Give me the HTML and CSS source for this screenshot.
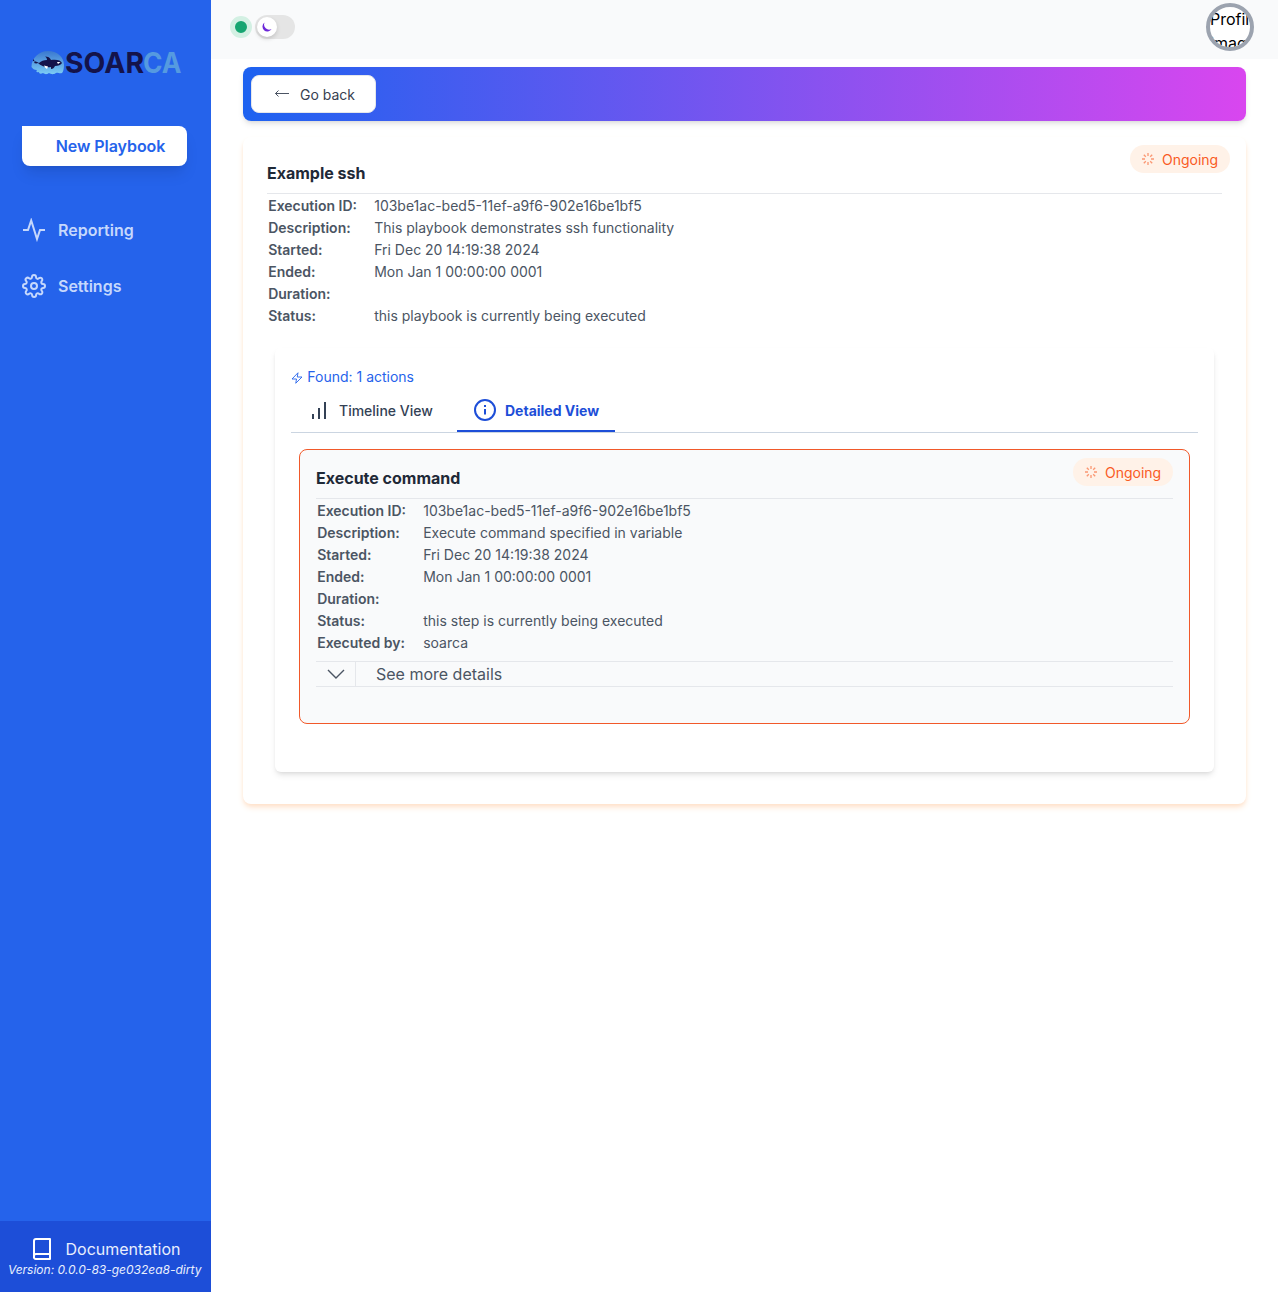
FILE: index.html
```html
<!DOCTYPE html>
<html lang="en">
<head>
<meta charset="utf-8">
<title>SOARCA</title>
<link rel="stylesheet" href="styles.css">
</head>
<body>
<div class="app">
  <aside class="sidebar">
    <svg class="logo" width="154" height="26" viewBox="0 0 154 26">
      <defs>
        <linearGradient id="sea" x1="0" y1="0" x2="0" y2="1"><stop offset="0" stop-color="#3a78d0"/><stop offset="1" stop-color="#7cccf5"/></linearGradient>
      </defs>
      <path fill="url(#sea)" d="M1.500 17C1.500 8 9 1 18 1s16 6 16 14c0 4-1 7-2 8-3 1-4-1-6 0-3 2-5 1-7 0-3 2-4 1-6 0-2 1-4 1-4-1-3 1-3-1-2-2-3 0-4-1-5.500-3z"/>
      <path fill="#14134a" d="M3 11c3 0 4 1 6 2 2-2 5-3 8-3 0-2-1-3-2-3.500 3 0 5 1 6 3.500 5-1 10 0 11 3-1 2-4 3-7 3-1 2-2 3-4 3v-2c-5 1-10-1-13-4-2 1-3 0-4 0 1-1 1-2-1-4z"/>
      <path fill="#fff" d="M14 15.500l4 1-1 2.500-2-1.500zM27 12h3.500l-2.500 2z"/>
      <text class="logo-dark" x="35" y="22.500" textLength="79" lengthAdjust="spacingAndGlyphs">SOAR</text>
      <text class="logo-light" x="113" y="22.500" textLength="38.500" lengthAdjust="spacingAndGlyphs">CA</text>
    </svg>
    <button class="new-playbook">New Playbook</button>
    <nav class="nav">
      <a class="nav-item"><svg width="24" height="24" viewBox="0 0 24 24" fill="none" stroke="currentColor" stroke-width="2"><path d="M1 12h5L9.200 2.500 15 21l3-9h5"/></svg>Reporting</a>
      <a class="nav-item"><svg width="24" height="24" viewBox="0 0 24 24" fill="none" stroke="currentColor" stroke-width="2" stroke-linejoin="round"><circle cx="12" cy="12" r="3"/><path d="M19.400 15a1.650 1.650 0 0 0 .33 1.820l.06.06a2 2 0 1 1-2.830 2.830l-.06-.06a1.650 1.650 0 0 0-2.800 1.170V21a2 2 0 0 1-4 0v-.09A1.650 1.650 0 0 0 9 19.400a1.650 1.650 0 0 0-1.820.33l-.06.06a2 2 0 1 1-2.830-2.830l.06-.06a1.650 1.650 0 0 0-1.170-2.800H3a2 2 0 0 1 0-4h.09A1.650 1.650 0 0 0 4.600 9a1.650 1.650 0 0 0-.33-1.820l-.06-.06a2 2 0 1 1 2.830-2.830l.06.06A1.650 1.650 0 0 0 9 4.600a1.650 1.650 0 0 0 1-1.510V3a2 2 0 0 1 4 0v.09a1.650 1.650 0 0 0 2.820 1.260l.06-.06a2 2 0 1 1 2.830 2.830l-.06.06A1.650 1.650 0 0 0 19.400 9a1.650 1.650 0 0 0 1.510 1H21a2 2 0 0 1 0 4h-.09A1.650 1.650 0 0 0 19.400 15z"/></svg>Settings</a>
    </nav>
    <footer class="side-footer">
      <a class="docs"><svg width="24" height="24" viewBox="0 0 24 24" fill="none" stroke="currentColor" stroke-width="2" stroke-linejoin="round"><path d="M4 19.500V4a2 2 0 0 1 2-2h14v20H6a2 2 0 0 1-2-2.500zM4 19a2 2 0 0 1 2-2h14"/></svg>Documentation</a>
      <em class="version">Version: 0.0.0-83-ge032ea8-dirty</em>
    </footer>
  </aside>
  <div class="content">
    <header class="topbar">
      <span class="online"></span>
      <span class="toggle"><span class="knob"><svg width="12" height="12" viewBox="0 0 12 12"><path fill="#6d28d9" d="M3.600 1.500A4.900 4.900 0 1 0 10.600 8 5 5 0 0 1 3.600 1.500z"/></svg></span></span>
      <span class="avatar">Profile image</span>
    </header>
    <main class="main">
      <div class="banner">
        <button class="back"><svg width="16" height="16" viewBox="0 0 16 16" fill="none" stroke="currentColor" stroke-width=".9"><path d="M15 7.500H1.500M4.500 4.500l-3 3 3 3"/></svg>Go back</button>
      </div>
      <section class="card">
        <span class="badge"><svg width="12" height="12" viewBox="0 0 12 12" stroke="currentColor" stroke-width="1.300"><path d="M6 0v3M6 9v3M0 6h3M9 6h3M1.800 1.800l2 2M8.200 8.200l2 2M1.800 10.200l2-2M8.200 3.800l2-2"/></svg>Ongoing</span>
        <h2 class="title">Example ssh</h2>
        <dl class="facts">
          <dt>Execution ID:</dt><dd>103be1ac-bed5-11ef-a9f6-902e16be1bf5</dd>
          <dt>Description:</dt><dd>This playbook demonstrates ssh functionality</dd>
          <dt>Started:</dt><dd>Fri Dec 20 14:19:38 2024</dd>
          <dt>Ended:</dt><dd>Mon Jan 1 00:00:00 0001</dd>
          <dt>Duration:</dt><dd></dd>
          <dt>Status:</dt><dd>this playbook is currently being executed</dd>
        </dl>
        <div class="panel">
          <p class="found"><svg width="12" height="12" viewBox="0 0 24 24" fill="none" stroke="currentColor" stroke-width="1.800" stroke-linejoin="round"><path d="M14 1.500 2 14h9l-1.500 8.500L22 10h-9.500z"/></svg>Found: 1 actions</p>
          <div class="tabs">
            <a class="tab"><svg width="24" height="24" viewBox="0 0 24 24" fill="none" stroke="currentColor" stroke-width="2"><path d="M6 21v-5M12 21V10M18 21V4"/></svg>Timeline View</a>
            <a class="tab active"><svg width="24" height="24" viewBox="0 0 24 24" fill="none" stroke="currentColor" stroke-width="2"><circle cx="12" cy="12" r="10"/><path d="M12 16.500v-5.500M12 9V7"/></svg>Detailed View</a>
          </div>
          <article class="step">
            <span class="badge"><svg width="12" height="12" viewBox="0 0 12 12" stroke="currentColor" stroke-width="1.300"><path d="M6 0v3M6 9v3M0 6h3M9 6h3M1.800 1.800l2 2M8.200 8.200l2 2M1.800 10.200l2-2M8.200 3.800l2-2"/></svg>Ongoing</span>
            <h2 class="title">Execute command</h2>
            <dl class="facts">
              <dt>Execution ID:</dt><dd>103be1ac-bed5-11ef-a9f6-902e16be1bf5</dd>
              <dt>Description:</dt><dd>Execute command specified in variable</dd>
              <dt>Started:</dt><dd>Fri Dec 20 14:19:38 2024</dd>
              <dt>Ended:</dt><dd>Mon Jan 1 00:00:00 0001</dd>
              <dt>Duration:</dt><dd></dd>
              <dt>Status:</dt><dd>this step is currently being executed</dd>
              <dt>Executed by:</dt><dd>soarca</dd>
            </dl>
            <div class="more"><span class="chevron"><svg width="18" height="10" viewBox="0 0 18 10" fill="none" stroke="currentColor" stroke-width="1.400"><path d="M1 1l8 8 8-8"/></svg></span>See more details</div>
          </article>
        </div>
      </section>
    </main>
  </div>
</div>
</body>
</html>
```
FILE: styles.css
```css
* { box-sizing: border-box; }
body { margin: 0; background: #fff; font: 16px/24px Inter, "Liberation Sans", sans-serif; color: #4b5563; }
svg { flex: none; }
h2, p, dl, dd { margin: 0; }
button { font: inherit; border: 0; }
.app { display: flex; min-height: 1292px; }

.sidebar { width: 211px; flex: none; display: flex; flex-direction: column; background: #2563eb; }
.logo { margin: 50px 0 0 30px; overflow: visible; }
.logo-dark, .logo-light { font: 700 28.500px Inter, sans-serif; fill: #14134a; }
.logo-light { fill: #559ae0; }
.new-playbook { width: 165px; height: 40px; margin: 50px 0 0 22px; padding: 0 0 0 12px; background: #fff; color: #2563eb; font-weight: 600; letter-spacing: -.05px; border-radius: 0 8px 8px 8px; box-shadow: 0 10px 15px -3px rgba(0,0,0,.1), 0 4px 6px -4px rgba(0,0,0,.1); }
.nav { display: flex; flex-direction: column; gap: 32px; margin: 52px 0 0 22px; }
.nav-item { display: flex; gap: 12px; color: #c6d8fc; font-weight: 600; }
.side-footer { height: 71px; margin-top: auto; padding-top: 16px; background: #1d4ed8; color: #e9effd; }
.docs { display: flex; gap: 11.500px; padding-left: 30px; }
.docs svg { color: #fff; }
.version { display: block; padding-left: 8px; font-size: 12px; line-height: 17px; white-space: nowrap; }

.content { flex: 1; min-width: 0; }
.topbar { display: flex; align-items: center; height: 59px; padding: 0 24px 5px 19px; background: #f9fafb; }
.online { width: 22px; height: 22px; border: 5px solid #d3f0e3; border-radius: 50%; background: #16a571; }
.toggle { width: 40px; height: 24px; margin-left: 3px; padding: 2px; border-radius: 12px; background: #e5e5e5; }
.knob { display: flex; align-items: center; justify-content: center; width: 20px; height: 20px; border-radius: 50%; background: #fff; box-shadow: 0 2px 4px rgba(0,0,0,.15); }
.avatar { width: 48px; height: 48px; margin-left: auto; border: 4px solid #9ca3af; border-radius: 50%; overflow: hidden; background: #fff; color: #000; }

.main { padding: 8px 32px; }
.banner { height: 54px; padding: 8px; border-radius: 8px; background: linear-gradient(90deg, #1d62f0, #d946ef); box-shadow: 0 4px 6px -1px rgba(0,0,0,.1), 0 2px 4px -2px rgba(0,0,0,.1); }
.back { display: flex; align-items: center; gap: 10px; width: 125px; height: 38px; padding: 2px 0 0 22px; border: 1px solid #e5e7eb; border-radius: 8px; background: #fff; color: #374151; font-size: 14px; }
.back svg { margin-top: -2px; }
.card { position: relative; height: 667px; margin-top: 16px; padding: 24px; border-radius: 8px; background: #fff; box-shadow: 0 4px 6px -1px #ffe2cb, 0 2px 4px -2px #ffdcc0; }
.badge { position: absolute; top: 8px; right: 16px; display: flex; align-items: center; gap: 8px; width: 100px; height: 28px; padding: 1px 12px 0; border-radius: 14px; background: #fff2e8; color: #f95b24; font-size: 14px; }
.badge svg { opacity: .6; margin-top: -2px; }
.title { height: 33px; border-bottom: 1px solid #e5e7eb; color: #1f2937; font-size: 16px; font-weight: 650; line-height: 24px; }
.facts { display: grid; grid-template-columns: 106px 1fr; grid-auto-rows: 22px; padding: 1px 0 0 1.200px; font-size: 14px; line-height: 22px; }
.facts dt { font-weight: 600; }
.panel { height: 424px; margin: 21px 8px 0; padding: 17px 16px; border-radius: 6px; box-shadow: 0 4px 6px -1px rgba(0,0,0,.1), 0 2px 4px -2px rgba(0,0,0,.1); }
.found { display: flex; align-items: center; gap: 4.300px; color: #2563eb; font-size: 14px; }
.found svg { margin-top: 2px; }
.tabs { display: flex; height: 44px; border-bottom: 1px solid #cbd5e1; }
.tab { display: flex; align-items: center; gap: 8px; width: 166px; padding: 1px 0 0 16px; color: #334155; font-size: 14px; font-weight: 500; }
.tab svg { margin-top: -2px; }
.tab.active { width: 158px; padding-top: 2px; border-bottom: 2px solid #1d4ed8; color: #1d4ed8; font-weight: 700; }
.step { position: relative; height: 275px; margin: 16px 8px 0; padding: 16px; border: 1px solid #f1592a; border-radius: 8px; background: #f9fafb; }
.more { display: flex; height: 26px; margin-top: 7px; border: solid #e5e7eb; border-width: 1px 0; }
.chevron { display: flex; align-items: center; justify-content: center; width: 40px; margin-right: 20px; border-right: 1px solid #e5e7eb; }
```
